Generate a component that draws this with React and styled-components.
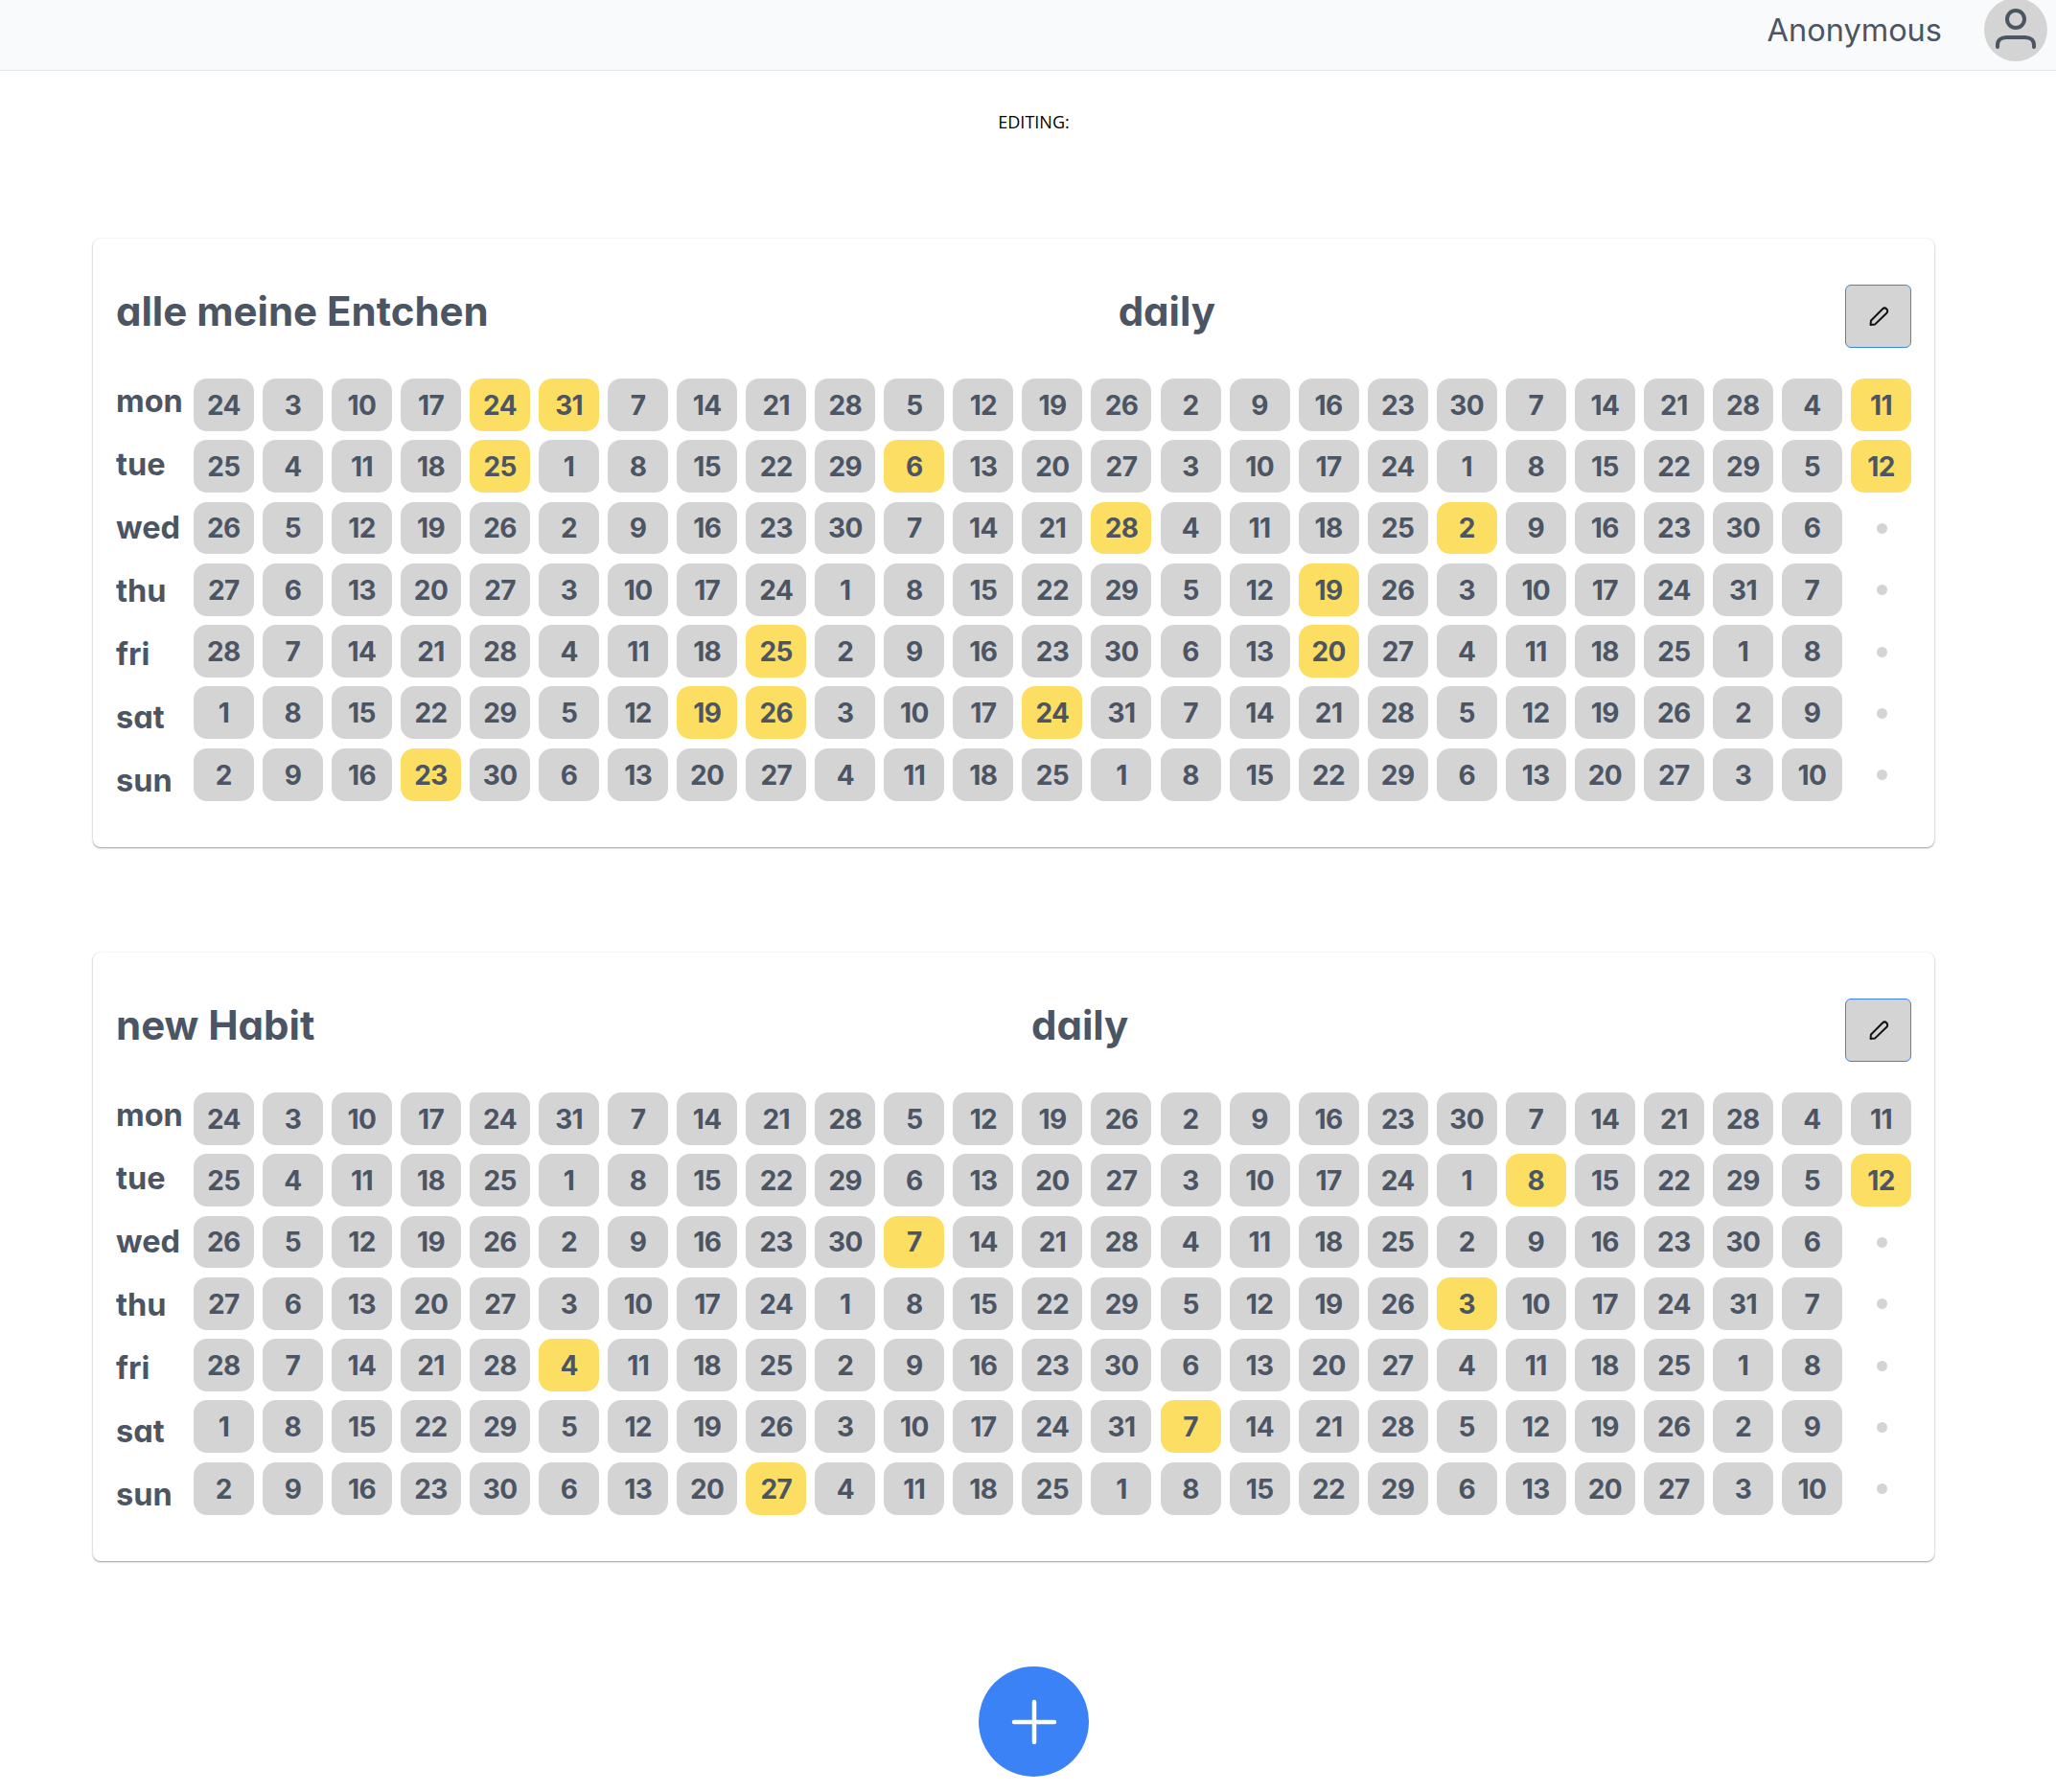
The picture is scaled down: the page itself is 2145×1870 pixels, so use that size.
import React from 'react';
import styled, { createGlobalStyle } from 'styled-components';

const GlobalStyle = createGlobalStyle`
  html, body {
    margin: 0;
    padding: 0;
    background: #ffffff;
    font-family: "Inter", "Liberation Sans", sans-serif;
    color: #4b5563;
  }
`;

const Page = styled.div`
  width: 2145px;
  height: 1870px;
  overflow: hidden;
`;

const TopBar = styled.header`
  height: 73px;
  box-sizing: content-box;
  display: flex;
  justify-content: flex-end;
  align-items: flex-start;
  gap: 44px;
  padding-right: 9px;
  background: #f9fafb;
  border-bottom: 1px solid #e5e7eb;
  overflow: hidden;
`;

const UserName = styled.span`
  font-size: 32.5px;
  line-height: 64px;
  font-weight: 400;
`;

const Avatar = styled.div`
  width: 66px;
  height: 66px;
  margin-top: -2px;
  border-radius: 50%;
  background: #d4d4d4;
  display: flex;
  align-items: center;
  justify-content: center;
`;

const EditingLabel = styled.div`
  padding: 42px 0 0 12px;
  height: 133px;
  box-sizing: content-box;
  text-align: center;
  font-family: "Open Sans", sans-serif;
  font-size: 18px;
  line-height: 22px;
  color: #000000;
`;

const Cards = styled.main`
  display: flex;
  flex-direction: column;
  gap: 110px;
  width: 1921px;
  margin-left: 97px;
`;

const Card = styled.section`
  height: 635px;
  box-sizing: border-box;
  padding: 48px 24px 0;
  border-radius: 8px;
  background: #ffffff;
  box-shadow: 0 1px 2px rgba(0, 0, 0, 0.38), 0 0 3px rgba(0, 0, 0, 0.06);
`;

const CardHead = styled.div`
  display: flex;
  justify-content: space-between;
  align-items: flex-start;
  height: 98px;
`;

const Title = styled.h2`
  margin: 0;
  font-size: 42px;
  line-height: 56px;
  font-weight: 700;
  font-feature-settings: "cv11";
`;

const EditButton = styled.button`
  width: 69px;
  height: 66px;
  padding: 0;
  border: 1px solid #3b82f6;
  border-radius: 6px;
  background: #d4d4d4;
  display: flex;
  align-items: center;
  justify-content: center;
`;

const Board = styled.div`
  display: flex;
  align-items: flex-start;
`;

const DayLabels = styled.div`
  width: 81px;
  margin-top: -9px;
  display: flex;
  flex-direction: column;
`;

const DayLabel = styled.div`
  height: 66px;
  line-height: 66px;
  font-size: 32.5px;
  font-weight: 700;
  font-feature-settings: "cv11";
`;

const Weeks = styled.div`
  display: grid;
  grid-template-columns: repeat(25, 63px);
  grid-auto-rows: 54.75px;
  column-gap: 9.06px;
  row-gap: 9.55px;
`;

const Day = styled.div`
  display: flex;
  align-items: center;
  justify-content: center;
  padding-top: 1px;
  border-radius: 14px;
  background: ${props => (props.$done ? '#fcdf62' : '#d4d4d4')};
  font-size: 28px;
  font-weight: 700;
  letter-spacing: -0.6px;
`;

const EmptySlot = styled.div`
  display: flex;
  align-items: center;
  justify-content: center;
  padding: 1px 0 0 2px;
  &::before {
    content: '';
    width: 11px;
    height: 11px;
    border-radius: 50%;
    background: #d4d4d4;
  }
`;

const Footer = styled.div`
  display: flex;
  justify-content: center;
  padding: 110px 0 0 12px;
`;

const AddButton = styled.button`
  width: 115px;
  height: 115px;
  padding: 0;
  border: none;
  border-radius: 50%;
  background: #3b82f6;
  display: flex;
  align-items: center;
  justify-content: center;
`;

const dayNames = ['mon', 'tue', 'wed', 'thu', 'fri', 'sat', 'sun'];

const calendar = [
  [24, 3, 10, 17, 24, 31, 7, 14, 21, 28, 5, 12, 19, 26, 2, 9, 16, 23, 30, 7, 14, 21, 28, 4, 11],
  [25, 4, 11, 18, 25, 1, 8, 15, 22, 29, 6, 13, 20, 27, 3, 10, 17, 24, 1, 8, 15, 22, 29, 5, 12],
  [26, 5, 12, 19, 26, 2, 9, 16, 23, 30, 7, 14, 21, 28, 4, 11, 18, 25, 2, 9, 16, 23, 30, 6],
  [27, 6, 13, 20, 27, 3, 10, 17, 24, 1, 8, 15, 22, 29, 5, 12, 19, 26, 3, 10, 17, 24, 31, 7],
  [28, 7, 14, 21, 28, 4, 11, 18, 25, 2, 9, 16, 23, 30, 6, 13, 20, 27, 4, 11, 18, 25, 1, 8],
  [1, 8, 15, 22, 29, 5, 12, 19, 26, 3, 10, 17, 24, 31, 7, 14, 21, 28, 5, 12, 19, 26, 2, 9],
  [2, 9, 16, 23, 30, 6, 13, 20, 27, 4, 11, 18, 25, 1, 8, 15, 22, 29, 6, 13, 20, 27, 3, 10],
];

// "row:column" of every finished day
const habits = [
  {
    name: 'alle meine Entchen',
    done: ['0:4', '0:5', '0:24', '1:4', '1:10', '1:24', '2:13', '2:18', '3:16', '4:8', '4:16', '5:7', '5:8', '5:12', '6:3'],
  },
  {
    name: 'new Habit',
    done: ['1:19', '1:24', '2:10', '3:18', '4:5', '5:14', '6:8'],
  },
];

const UserIcon = () => (
  <svg width="44" height="44" viewBox="0 0 44 44" fill="none" stroke="#4b5563" strokeWidth="4" strokeLinecap="round">
    <circle cx="22" cy="11" r="9" />
    <path d="M3 40 v-2 c0 -5 4 -8 9 -8 h20 c5 0 9 3 9 8 v2" />
  </svg>
);

const PencilIcon = () => (
  <svg width="22" height="22" viewBox="-0.5 0 22 22" fill="none" stroke="#111111" strokeWidth="2" strokeLinejoin="round">
    <path d="M2 20 L2.5 15.5 L14.5 3.5 a3 3 0 0 1 4.3 4.3 L6.5 19.6 Z" />
  </svg>
);

const PlusIcon = () => (
  <svg width="50" height="50" viewBox="0 0 50 50" stroke="#ffffff" strokeWidth="4.5" strokeLinecap="round">
    <path d="M25 4 V46 M4 25 H46" />
  </svg>
);

const HabitCard = ({ habit }) => (
  <Card>
    <CardHead>
      <Title>{habit.name}</Title>
      <Title as="div">daily</Title>
      <EditButton>
        <PencilIcon />
      </EditButton>
    </CardHead>
    <Board>
      <DayLabels>
        {dayNames.map(name => (
          <DayLabel key={name}>{name}</DayLabel>
        ))}
      </DayLabels>
      <Weeks>
        {calendar.map((row, r) =>
          Array.from({ length: 25 }, (_, c) =>
            row[c] === undefined ? (
              <EmptySlot key={`${r}:${c}`} />
            ) : (
              <Day key={`${r}:${c}`} $done={habit.done.includes(`${r}:${c}`)}>
                {row[c]}
              </Day>
            )
          )
        )}
      </Weeks>
    </Board>
  </Card>
);

export default function App() {
  return (
    <Page>
      <GlobalStyle />
      <TopBar>
        <UserName>Anonymous</UserName>
        <Avatar>
          <UserIcon />
        </Avatar>
      </TopBar>
      <EditingLabel>EDITING:</EditingLabel>
      <Cards>
        {habits.map(habit => (
          <HabitCard key={habit.name} habit={habit} />
        ))}
      </Cards>
      <Footer>
        <AddButton>
          <PlusIcon />
        </AddButton>
      </Footer>
    </Page>
  );
}
